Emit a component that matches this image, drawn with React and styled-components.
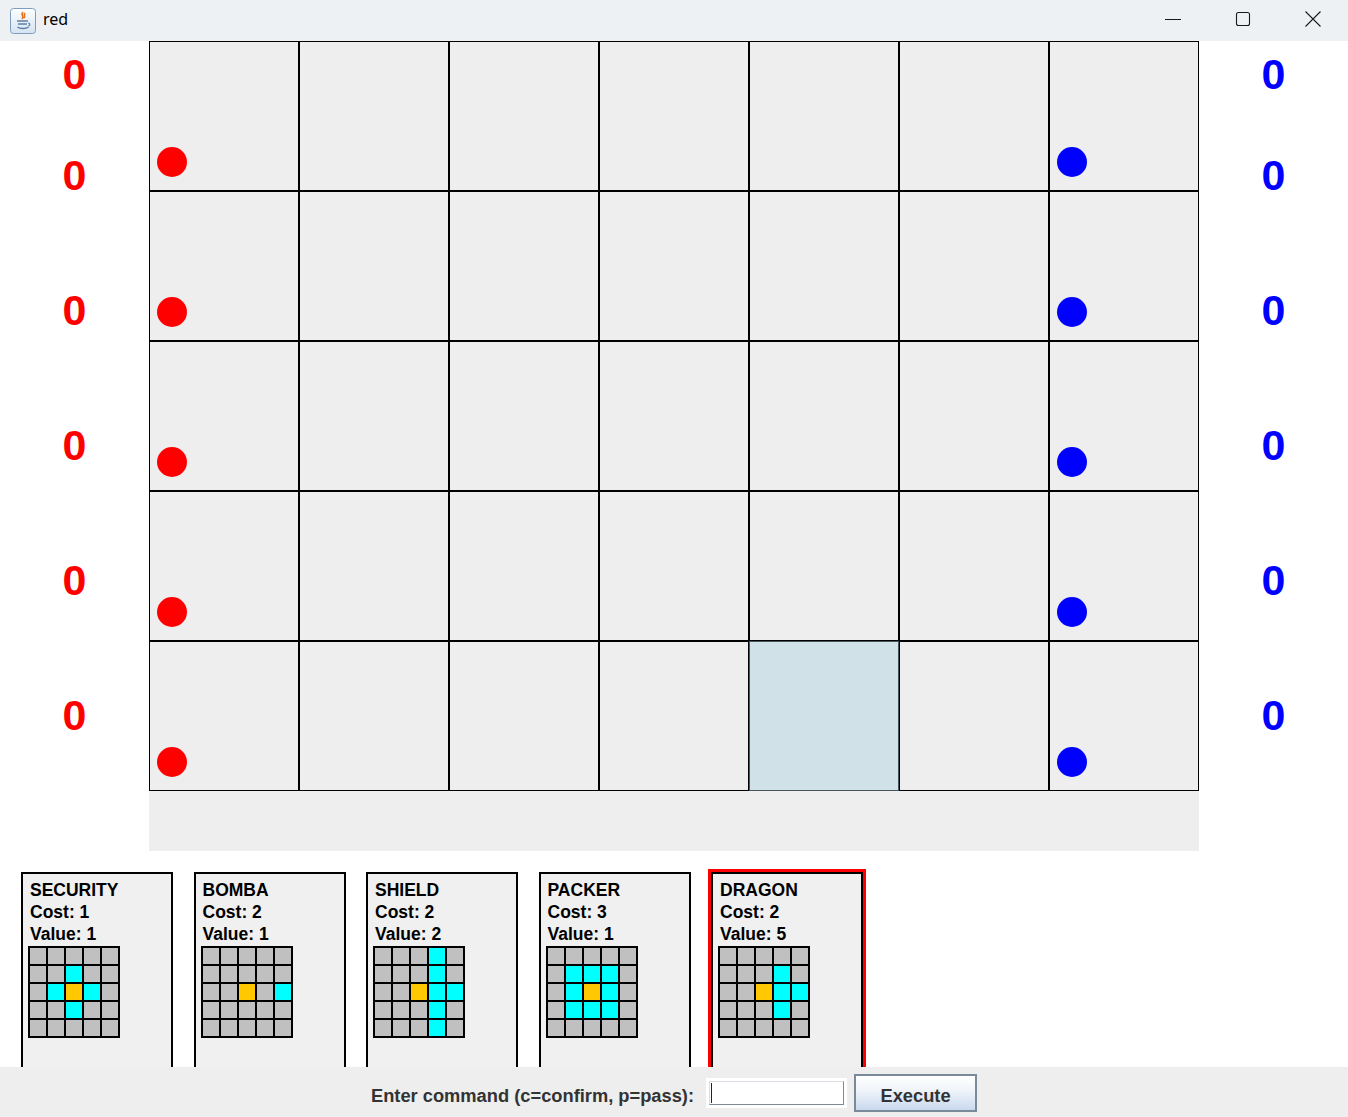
import styled, { createGlobalStyle } from "styled-components";

const GlobalStyle = createGlobalStyle`
  html, body {
    margin: 0;
    padding: 0;
    background: #ffffff;
  }
  * {
    box-sizing: border-box;
  }
`;

const ROWS = 5;
const COLS = 7;

const cards = [
  { name: "SECURITY", cost: 1, value: 1, cells: ["1,2", "2,1", "2,3", "3,2"] },
  { name: "BOMBA", cost: 2, value: 1, cells: ["2,4"] },
  { name: "SHIELD", cost: 2, value: 2, cells: ["0,3", "1,3", "2,3", "3,3", "4,3", "2,4"] },
  { name: "PACKER", cost: 3, value: 1, cells: ["1,1", "1,2", "1,3", "2,1", "2,3", "3,1", "3,2", "3,3"] },
  { name: "DRAGON", cost: 2, value: 5, cells: ["1,3", "2,3", "2,4", "3,3"], selected: true },
];

const Window = styled.div`
  width: 1348px;
  height: 1117px;
  display: flex;
  flex-direction: column;
  overflow: hidden;
  font-family: "Liberation Sans", Arial, sans-serif;
`;

const TitleBar = styled.div`
  height: 41px;
  flex: none;
  display: flex;
  align-items: center;
  background: #eef1f4;
  padding-left: 10px;
`;

const TitleText = styled.span`
  margin-left: 7px;
  font-family: "Noto Sans", sans-serif;
  font-size: 16px;
  color: #000;
  margin-top: -3px;
`;

const Controls = styled.div`
  margin-left: auto;
  display: flex;
  height: 100%;
`;

const ControlButton = styled.div`
  width: 70px;
  height: 100%;
  display: flex;
  align-items: center;
  justify-content: center;
  padding-bottom: 4px;
`;

const MainRow = styled.div`
  display: flex;
  flex: none;
`;

const ScoreColumn = styled.div`
  width: 149px;
  display: flex;
  flex-direction: column;
`;

const Score = styled.div`
  height: ${(p) => (p.$first ? "66.5px" : "135px")};
  line-height: ${(p) => (p.$first ? "66.5px" : "135px")};
  text-align: center;
  font-size: 43px;
  font-weight: bold;
  color: ${(p) => p.$color};
`;

const Board = styled.div`
  width: 1050px;
  display: flex;
  flex-direction: column;
`;

const Grid = styled.div`
  display: grid;
  grid-template-columns: repeat(${COLS}, 150px);
  grid-template-rows: repeat(${ROWS}, 150px);
`;

const Cell = styled.div`
  border: 1px solid ${(p) => (p.$hl ? "#44555c" : "#000")};
  background: ${(p) => (p.$hl ? "#d0e2e8" : "#eeeeee")};
  display: flex;
  align-items: flex-end;
  padding: 0 0 13px 7px;
`;

const Piece = styled.div`
  width: 30px;
  height: 30px;
  border-radius: 50%;
  background: ${(p) => p.$color};
`;

const Strip = styled.div`
  height: 60px;
  background: #eeeeee;
`;

const CardArea = styled.div`
  flex: 1;
  min-height: 0;
  overflow: hidden;
  display: flex;
  gap: 20.5px;
  padding: 21px 0 0 21px;
`;

const Card = styled.div`
  width: 152px;
  height: 230px;
  flex: none;
  border: 2px solid #000;
  outline: ${(p) => (p.$selected ? "3px solid #ff0000" : "none")};
  background: #f0f0f0;
  padding: 5px 5px 3px;
  font-size: 17.5px;
  font-weight: bold;
  color: #000;
`;

const CardLine = styled.div`
  line-height: 22px;
  padding-left: 2px;
  white-space: nowrap;
`;

const Pattern = styled.div`
  margin-top: 1px;
  width: 92px;
  display: grid;
  grid-template-columns: repeat(5, 16px);
  grid-auto-rows: 16px;
  gap: 2px;
  padding: 2px;
  background: #000;
`;

const PatternCell = styled.div`
  background: ${(p) => p.$fill};
`;

const BottomBar = styled.div`
  height: 50px;
  flex: none;
  background: #eeeeee;
  display: flex;
  align-items: center;
  justify-content: center;
  font-size: 18.3px;
  font-weight: bold;
  color: #333333;
`;

const Prompt = styled.span`
  margin-right: 12px;
  margin-top: 8px;
`;

const Field = styled.div`
  width: 141px;
  height: 30px;
  background: #ffffff;
  padding: 3px;
  margin-right: 7px;
  margin-top: 2px;
`;

const FieldInner = styled.div`
  height: 100%;
  border-top: 1px solid #d8dde3;
  border-left: 1px solid #d8dde3;
  border-right: 1px solid #7d8a96;
  border-bottom: 1px solid #7d8a96;
  padding: 1px 0 1px 1px;
`;

const Caret = styled.div`
  width: 1px;
  height: 100%;
  background: #222;
`;

const ExecuteButton = styled.div`
  width: 123px;
  height: 38px;
  border: 2px solid #7a8a99;
  background: linear-gradient(#ffffff, #f1f5fa 40%, #c9d9ee);
  display: flex;
  align-items: center;
  justify-content: center;
  color: #333333;
  margin-top: 2px;
  padding-top: 5px;
`;

const JavaIcon = () => (
  <svg width="26" height="26" viewBox="0 0 26 26">
    <defs>
      <linearGradient id="jbg" x1="0" y1="0" x2="0" y2="1">
        <stop offset="0" stopColor="#fdfeff" />
        <stop offset="1" stopColor="#d5e3f1" />
      </linearGradient>
    </defs>
    <rect x="0.5" y="0.5" width="25" height="25" rx="3" fill="url(#jbg)" stroke="#7f9cbc" />
    <path d="M13 4 C10 7 15 8 12 11 M15 5 C13 7 16 8 14 10" stroke="#e8701a" strokeWidth="1.6" fill="none" />
    <path d="M7 13 h11 M8 16 h9 M7.5 19 c2 2 9 2 11 0" stroke="#5d7fa6" strokeWidth="1.4" fill="none" />
    <path d="M18 15 c2.5 0 2.5 3 0 3" stroke="#5d7fa6" strokeWidth="1.2" fill="none" />
  </svg>
);

const Minimize = () => (
  <svg width="18" height="18" viewBox="0 0 18 18">
    <path d="M1 9.5 H17" stroke="#1a1a1a" strokeWidth="1" />
  </svg>
);

const Maximize = () => (
  <svg width="18" height="18" viewBox="0 0 18 18">
    <rect x="2.5" y="2.5" width="13" height="13" rx="2" fill="none" stroke="#1a1a1a" strokeWidth="1.1" />
  </svg>
);

const Close = () => (
  <svg width="18" height="18" viewBox="0 0 18 18">
    <path d="M1.5 1.5 L16.5 16.5 M16.5 1.5 L1.5 16.5" stroke="#1a1a1a" strokeWidth="1.1" />
  </svg>
);

function cellFill(card, r, c) {
  if (r === 2 && c === 2) return "#ffc800";
  if (card.cells.includes(`${r},${c}`)) return "#00ffff";
  return "#c0c0c0";
}

function App() {
  const scores = [0, 0, 0, 0, 0, 0];

  return (
    <Window>
      <GlobalStyle />
      <TitleBar>
        <JavaIcon />
        <TitleText>red</TitleText>
        <Controls>
          <ControlButton><Minimize /></ControlButton>
          <ControlButton><Maximize /></ControlButton>
          <ControlButton><Close /></ControlButton>
        </Controls>
      </TitleBar>

      <MainRow>
        <ScoreColumn>
          {scores.map((s, i) => (
            <Score key={i} $first={i === 0} $color="#ff0000">{s}</Score>
          ))}
        </ScoreColumn>
        <Board>
          <Grid>
            {Array.from({ length: ROWS * COLS }).map((_, i) => {
              const r = Math.floor(i / COLS);
              const c = i % COLS;
              return (
                <Cell key={i} $hl={r === 4 && c === 4}>
                  {c === 0 && <Piece $color="#ff0000" />}
                  {c === COLS - 1 && <Piece $color="#0000ff" />}
                </Cell>
              );
            })}
          </Grid>
          <Strip />
        </Board>
        <ScoreColumn>
          {scores.map((s, i) => (
            <Score key={i} $first={i === 0} $color="#0000ff">{s}</Score>
          ))}
        </ScoreColumn>
      </MainRow>

      <CardArea>
        {cards.map((card) => (
          <Card key={card.name} $selected={card.selected}>
            <CardLine>{card.name}</CardLine>
            <CardLine>Cost: {card.cost}</CardLine>
            <CardLine>Value: {card.value}</CardLine>
            <Pattern>
              {Array.from({ length: 25 }).map((_, i) => (
                <PatternCell key={i} $fill={cellFill(card, Math.floor(i / 5), i % 5)} />
              ))}
            </Pattern>
          </Card>
        ))}
      </CardArea>

      <BottomBar>
        <Prompt>Enter command (c=confirm, p=pass):</Prompt>
        <Field>
          <FieldInner>
            <Caret />
          </FieldInner>
        </Field>
        <ExecuteButton>Execute</ExecuteButton>
      </BottomBar>
    </Window>
  );
}

export default App;
